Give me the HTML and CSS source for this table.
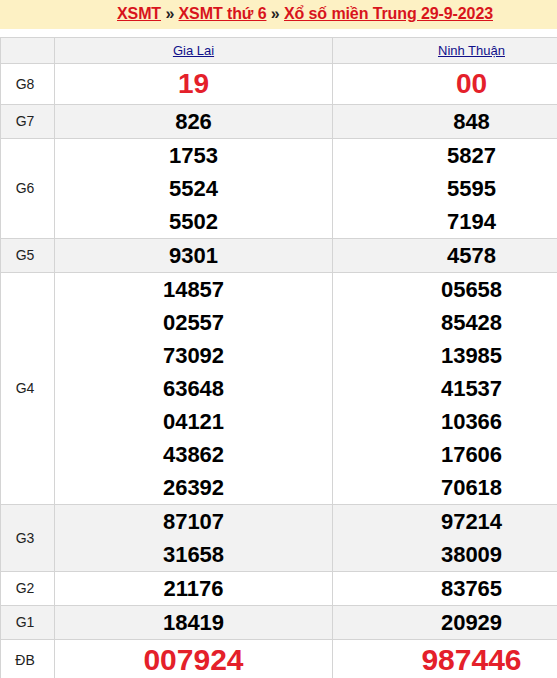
FILE: index.html
```html
<!DOCTYPE html>
<html lang="vi">
<head>
<meta charset="utf-8">
<title>XSMT 29-9-2023</title>
<link rel="stylesheet" href="styles.css">
</head>
<body>
<div class="frame">
<div class="wrap">
  <div class="title">
    <a href="#">XSMT</a> » <a href="#">XSMT thứ 6</a> » <a href="#">Xổ số miền Trung 29-9-2023</a>
  </div>
  <table class="kq">
    <colgroup><col class="c1"><col class="c2"><col class="c3"></colgroup>
    <tr class="head"><th></th><th><a href="#">Gia Lai</a></th><th><a href="#">Ninh Thuận</a></th></tr>
    <tr class="g8"><td class="lb">G8</td><td class="red">19</td><td class="red">00</td></tr>
    <tr class="alt"><td class="lb">G7</td><td><div>826</div></td><td><div>848</div></td></tr>
    <tr><td class="lb">G6</td><td><div>1753</div><div>5524</div><div>5502</div></td><td><div>5827</div><div>5595</div><div>7194</div></td></tr>
    <tr class="alt"><td class="lb">G5</td><td><div>9301</div></td><td><div>4578</div></td></tr>
    <tr><td class="lb">G4</td><td><div>14857</div><div>02557</div><div>73092</div><div>63648</div><div>04121</div><div>43862</div><div>26392</div></td><td><div>05658</div><div>85428</div><div>13985</div><div>41537</div><div>10366</div><div>17606</div><div>70618</div></td></tr>
    <tr class="alt"><td class="lb">G3</td><td><div>87107</div><div>31658</div></td><td><div>97214</div><div>38009</div></td></tr>
    <tr><td class="lb">G2</td><td><div>21176</div></td><td><div>83765</div></td></tr>
    <tr class="alt"><td class="lb">G1</td><td><div>18419</div></td><td><div>20929</div></td></tr>
    <tr class="db"><td class="lb">ĐB</td><td class="red">007924</td><td class="red">987446</td></tr>
  </table>
</div>
</div>
</body>
</html>
```
FILE: styles.css
```css
html, body {
  margin: 0;
  padding: 0;
  background: #fff;
}
body {
  font-family: "Liberation Sans", Arial, sans-serif;
  color: #000;
}
.frame {
  width: 557px;
  overflow: hidden;
}
.wrap {
  width: 610px;
}
.title {
  background: #fdf1c4;
  height: 29px;
  line-height: 27px;
  text-align: center;
  font-size: 16px;
  font-weight: bold;
  color: #222;
  margin-bottom: 8px;
  letter-spacing: -0.1px;
}
.title a {
  color: #d8141c;
  text-decoration: underline;
}
.kq {
  width: 610px;
  border-collapse: collapse;
  table-layout: fixed;
}
.kq col.c1 { width: 54px; }
.kq col.c2 { width: 278px; }
.kq col.c3 { width: 278px; }
.kq th, .kq td {
  border: 1px solid #d4d4d4;
  padding: 0;
  text-align: center;
  vertical-align: middle;
}
.kq tr.head th {
  background: #f2f2f2;
  height: 25px;
  font-size: 13px;
  font-weight: normal;
}
.kq tr.head a {
  color: #10108a;
  text-decoration: underline;
}
.kq td {
  font-size: 22px;
  font-weight: bold;
  line-height: 33px;
}
.kq td.lb {
  font-size: 14px;
  font-weight: normal;
  color: #222;
  padding-right: 5px;
}
.kq tr.alt td {
  background: #f2f2f2;
}
.kq tr.g8 td {
  height: 40px;
}
.kq td.red {
  color: #e4202a;
  font-size: 28px;
  line-height: 40px;
}
.kq tr.db td {
  height: 40px;
}
.kq tr.db td.red {
  font-size: 30px;
}
```
